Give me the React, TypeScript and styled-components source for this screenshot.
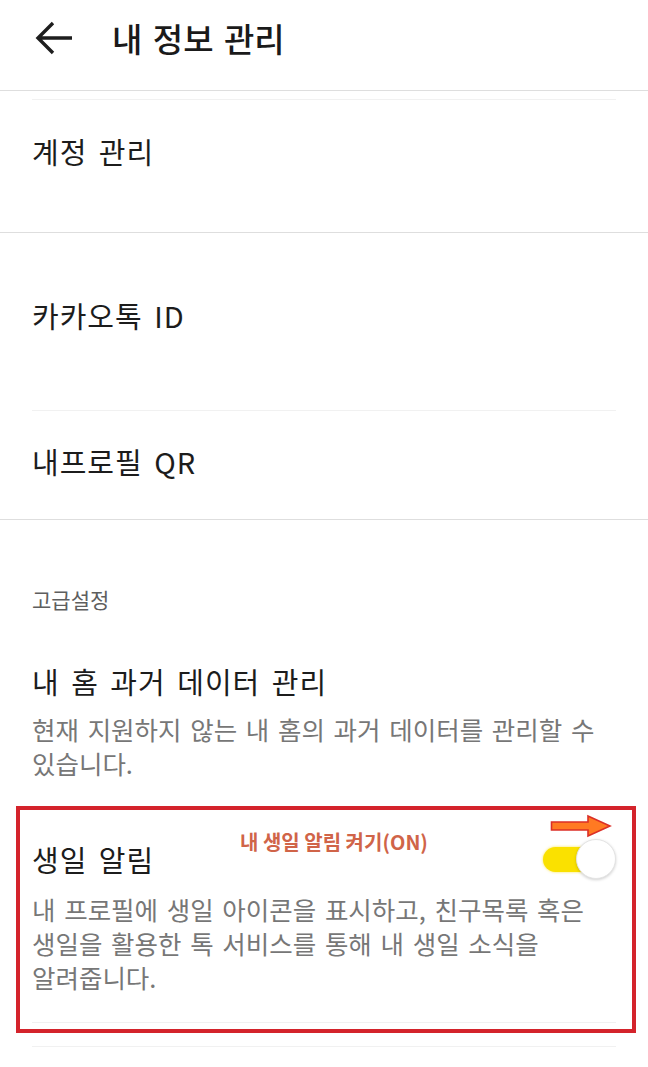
import styled, { createGlobalStyle } from 'styled-components';

const GlobalStyle = createGlobalStyle`
  html, body {
    margin: 0;
    padding: 0;
    background: #ffffff;
  }
  body {
    font-family: "Noto Sans CJK KR", "Noto Sans", sans-serif;
    color: #1c1c1c;
  }
`;

const Page = styled.div`
  width: 648px;
  height: 1067px;
  overflow: hidden;
  background: #ffffff;
`;

const Header = styled.header`
  height: 91px;
  display: flex;
  align-items: center;
  padding: 0 0 14px 35px;
  box-sizing: border-box;
  border-bottom: 1px solid #dedede;
`;

const BackButton = styled.button`
  width: 38px;
  height: 34px;
  padding: 0;
  border: none;
  background: none;
  display: flex;
  align-items: center;
  margin-right: 39px;
`;

const Title = styled.h1`
  margin: 0;
  font-size: 33px;
  font-weight: 500;
  word-spacing: 3px;
  line-height: 40px;
  color: #1a1a1a;
`;

const Spacer = styled.div<{ $h: number }>`
  height: ${(p) => p.$h}px;
`;

const Divider = styled.div<{ $inset?: boolean; $faint?: boolean }>`
  height: 1px;
  margin: 0 ${(p) => (p.$inset ? '32px' : '0')};
  background: ${(p) => (p.$faint ? '#f1f1f1' : '#dedede')};
`;

const Item = styled.div<{ $top: number; $bottom: number }>`
  padding: ${(p) => p.$top}px 28px ${(p) => p.$bottom}px 32px;
  display: flex;
  align-items: center;
  justify-content: space-between;
`;

const ItemText = styled.div`
  flex: 1;
`;

const ItemTitle = styled.div`
  font-size: 29px;
  line-height: 40px;
  letter-spacing: 1px;
  word-spacing: 4px;
  color: #1c1c1c;
`;

const ItemDesc = styled.div<{ $gap: number }>`
  margin-top: ${(p) => p.$gap}px;
  font-size: 25.5px;
  line-height: 34px;
  word-spacing: 3px;
  word-break: keep-all;
  color: #777777;
`;

const SectionLabel = styled.div`
  padding: 64px 32px 0;
  font-size: 21px;
  line-height: 30px;
  color: #5e5e5e;
`;

const Highlighted = styled.div`
  position: relative;
`;

const RedFrame = styled.div`
  position: absolute;
  left: 16px;
  right: 12px;
  top: 0;
  bottom: -10px;
  border: 4px solid #d4232b;
  pointer-events: none;
`;

const Note = styled.div`
  position: absolute;
  left: 240px;
  top: 22px;
  font-size: 20px;
  font-weight: 700;
  line-height: 28px;
  color: #d06448;
`;

const NoteArrow = styled.svg`
  position: absolute;
  left: 550px;
  top: 8px;
`;

const TitleRow = styled.div`
  display: flex;
  align-items: center;
  justify-content: space-between;
  padding-right: 4px;
`;

const Toggle = styled.div`
  position: relative;
  width: 73px;
  height: 42px;
  flex-shrink: 0;
`;

const Track = styled.div`
  position: absolute;
  left: 0;
  top: 9px;
  width: 50px;
  height: 25px;
  border-radius: 13px;
  background: #fae100;
  box-shadow: 0 0 3px rgba(250, 220, 0, 0.7);
`;

const Knob = styled.div`
  position: absolute;
  right: 0;
  top: 1px;
  width: 38px;
  height: 38px;
  border-radius: 50%;
  background: #ffffff;
  border: 1px solid #e4e4e4;
  box-shadow: 0 1px 3px rgba(0, 0, 0, 0.18);
`;

export default function App() {
  return (
    <Page>
      <GlobalStyle />
      <Header>
        <BackButton aria-label="뒤로">
          <svg width="38" height="34" viewBox="0 0 38 34">
            <path
              d="M37 17H3M18 2L3 17l15 15"
              fill="none"
              stroke="#1e1e1e"
              strokeWidth="3.4"
            />
          </svg>
        </BackButton>
        <Title>내 정보 관리</Title>
      </Header>

      <Spacer $h={8} />
      <Divider $inset $faint />

      <Item $top={31} $bottom={61}>
        <ItemTitle>계정 관리</ItemTitle>
      </Item>
      <Divider />

      <Item $top={62} $bottom={75}>
        <ItemTitle>카카오톡 ID</ItemTitle>
      </Item>
      <Divider $inset $faint />

      <Item $top={30} $bottom={38}>
        <ItemTitle>내프로필 QR</ItemTitle>
      </Item>
      <Divider />

      <SectionLabel>고급설정</SectionLabel>

      <Item $top={47} $bottom={26}>
        <ItemText>
          <ItemTitle>내 홈 과거 데이터 관리</ItemTitle>
          <ItemDesc $gap={11}>
            현재 지원하지 않는 내 홈의 과거 데이터를 관리할 수 있습니다.
          </ItemDesc>
        </ItemText>
      </Item>

      <Highlighted>
        <Item $top={32} $bottom={28}>
          <ItemText>
            <TitleRow>
              <ItemTitle>생일 알림</ItemTitle>
              <Toggle>
                <Track />
                <Knob />
              </Toggle>
            </TitleRow>
            <ItemDesc $gap={12}>
              내 프로필에 생일 아이콘을 표시하고, 친구목록 혹은 생일을 활용한 톡 서비스를 통해 내 생일 소식을
              알려줍니다.
            </ItemDesc>
          </ItemText>
        </Item>
        <Divider $inset $faint />
        <Note>내 생일 알림 켜기(ON)</Note>
        <NoteArrow width="62" height="24" viewBox="0 0 62 24">
          <path
            d="M1.5 8H38V2L60 12L38 22V16H1.5Z"
            fill="#ff7a22"
            stroke="#db2f27"
            strokeWidth="1.6"
          />
        </NoteArrow>
        <RedFrame />
      </Highlighted>

      <Spacer $h={23} />
      <Divider $inset $faint />
    </Page>
  );
}
